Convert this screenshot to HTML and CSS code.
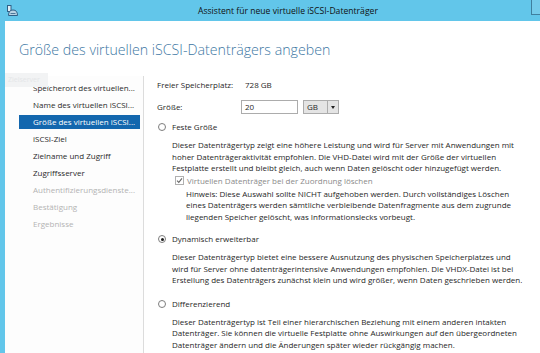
FILE: index.html
```html
<!DOCTYPE html>
<html lang="de">
<head>
    <meta charset="UTF-8">
    <title>Assistent für neue virtuelle iSCSI-Datenträger</title>
    <link rel="stylesheet" href="styles.css">
</head>
<body>
    <div class="window">
        <!-- Titelleiste -->
        <div class="titlebar">
            <svg class="app-icon" width="11" height="11" viewBox="0 0 11 11">
                <rect x="0.5" y="0.5" width="3.5" height="6" fill="#dfeef6" stroke="#2f5f86" stroke-width="1"/>
                <path d="M1.5 10.5 Q1.5 5 6 5 Q10.5 5 10.5 10.5 Z" fill="#b9d3e4" stroke="#2f5f86" stroke-width="1"/>
                <line x1="3.5" y1="8.5" x2="8.5" y2="8.5" stroke="#2f5f86" stroke-width="0.8"/>
            </svg>
            <span class="title">Assistent für neue virtuelle iSCSI-Datenträger</span>
            <span class="caption-btn"></span>
        </div>

        <div class="client">
            <h1>Größe des virtuellen iSCSI-Datenträgers angeben</h1>

            <div class="main">
                <div class="ghost">Zielserver</div>

                <!-- Schritte des Assistenten -->
                <ul class="nav">
                    <li>Speicherort des virtuellen...</li>
                    <li>Name des virtuellen iSCSI...</li>
                    <li class="active">Größe des virtuellen iSCSI...</li>
                    <li>iSCSI-Ziel</li>
                    <li>Zielname und Zugriff</li>
                    <li>Zugriffsserver</li>
                    <li class="disabled">Authentifizierungsdienste...</li>
                    <li class="disabled">Bestätigung</li>
                    <li class="disabled">Ergebnisse</li>
                </ul>

                <div class="content">
                    <div class="row">
                        <span class="label">Freier Speicherplatz:</span>
                        <span>728 GB</span>
                    </div>
                    <div class="row size-row">
                        <span class="label">Größe:</span>
                        <span class="textbox">20</span>
                        <span class="combo">GB<span class="combo-arrow"></span></span>
                    </div>

                    <div class="radio-row first">
                        <span class="radio"></span>Feste Größe
                    </div>
                    <p class="desc">
                        Dieser Datenträgertyp zeigt eine höhere Leistung und wird für Server mit Anwendungen mit<br>
                        hoher Datenträgeraktivität empfohlen. Die VHD-Datei wird mit der Größe der virtuellen<br>
                        Festplatte erstellt und bleibt gleich, auch wenn Daten gelöscht oder hinzugefügt werden.
                    </p>
                    <div class="check-row">
                        <span class="checkbox">
                            <svg width="7" height="7" viewBox="0 0 7 7"><path d="M1 3.6 L2.8 5.4 L6 1.4" fill="none" stroke="#6a6a6a" stroke-width="1.1"/></svg>
                        </span>Virtuellen Datenträger bei der Zuordnung löschen
                    </div>
                    <p class="desc note">
                        Hinweis: Diese Auswahl sollte NICHT aufgehoben werden. Durch vollständiges Löschen<br>
                        eines Datenträgers werden sämtliche verbleibende Datenfragmente aus dem zugrunde<br>
                        liegenden Speicher gelöscht, was Informationslecks vorbeugt.
                    </p>

                    <div class="radio-row">
                        <span class="radio checked"></span>Dynamisch erweiterbar
                    </div>
                    <p class="desc">
                        Dieser Datenträgertyp bietet eine bessere Ausnutzung des physischen Speicherplatzes und<br>
                        wird für Server ohne datenträgerintensive Anwendungen empfohlen. Die VHDX-Datei ist bei<br>
                        Erstellung des Datenträgers zunächst klein und wird größer, wenn Daten geschrieben werden.
                    </p>

                    <div class="radio-row last">
                        <span class="radio"></span>Differenzierend
                    </div>
                    <p class="desc">
                        Dieser Datenträgertyp ist Teil einer hierarchischen Beziehung mit einem anderen intakten<br>
                        Datenträger. Sie können die virtuelle Festplatte ohne Auswirkungen auf den übergeordneten<br>
                        Datenträger ändern und die Änderungen später wieder rückgängig machen.
                    </p>
                </div>
            </div>
        </div>
    </div>
</body>
</html>
```

FILE: styles.css
```css
/* Grundlayout des Fensters */
body {
    margin: 0;
    background: #62c6ea;
    font-family: "Open Sans", "Noto Sans", sans-serif;
    font-size: 8px;
    color: #1f1f1f;
    overflow: hidden;
}
.window {
    width: 540px;
    height: 353px;
    display: flex;
    flex-direction: column;
}
/* Titelleiste */
.titlebar {
    height: 21px;
    display: flex;
    align-items: center;
    flex-shrink: 0;
}
.app-icon {
    margin-left: 7px;
    margin-top: -1px;
}
.title {
    margin-left: 180px;
    font-size: 8.6px;
    color: #111;
}
.caption-btn {
    margin-left: auto;
    align-self: flex-start;
    width: 8px;
    height: 14px;
    border: 1px solid #3f7f9f;
    border-top: none;
    border-right: none;
    background: #75cbeb;
}
/* Inhaltsbereich */
.client {
    flex: 1;
    margin-left: 5px;
    background: #fff;
    display: flex;
    flex-direction: column;
}
h1 {
    margin: 19px 0 13px 14px;
    font-size: 14.2px;
    font-weight: 300;
    line-height: 20px;
    color: #3d77a3;
}
.main {
    flex: 1;
    display: flex;
    position: relative;
}
.ghost {
    position: absolute;
    left: 0;
    top: 0;
    width: 43px;
    height: 14px;
    background: #f2f3f4;
    color: #e4e6e8;
    font-size: 7px;
    line-height: 14px;
    padding-left: 3px;
    box-sizing: border-box;
    overflow: hidden;
}
/* Navigation links */
.nav {
    list-style: none;
    margin: 3px 0 0 0;
    padding: 5px 3px 0 14px;
    width: 121px;
    border-right: 1px solid #dcdcdc;
    background: #fdfdfd;
}
.nav li {
    height: 14px;
    line-height: 14px;
    margin-bottom: 3px;
    padding-left: 14px;
    white-space: nowrap;
    overflow: hidden;
    color: #2a2a2a;
}
.nav li.active {
    background: #1367ae;
    color: #fff;
}
.nav li.disabled {
    color: #b3b3b3;
}
/* Formular rechts */
.content {
    padding: 5px 0 0 13px;
}
.row {
    display: flex;
    align-items: center;
    height: 14px;
    line-height: 14px;
}
.label {
    width: 88px;
}
.size-row {
    margin-top: 8px;
}
.textbox {
    width: 52px;
    height: 12px;
    line-height: 12px;
    padding-left: 3px;
    border: 1px solid #acacac;
    background: #fff;
    margin-left: -4px;
}
.combo {
    position: relative;
    margin-left: 5px;
    width: 31px;
    height: 12px;
    line-height: 12px;
    padding-left: 3px;
    border: 1px solid #acacac;
    background: #e4e4e4;
}
.combo-arrow {
    position: absolute;
    right: 0;
    top: 0;
    width: 10px;
    height: 12px;
    border-left: 1px solid #acacac;
}
.combo-arrow::after {
    content: "";
    position: absolute;
    left: 3px;
    top: 5px;
    border-left: 2.5px solid transparent;
    border-right: 2.5px solid transparent;
    border-top: 3px solid #222;
}
.radio-row {
    display: flex;
    align-items: center;
    height: 14px;
    line-height: 14px;
    margin-top: 10px;
}
.radio-row.first {
    margin-top: 6px;
}
.radio-row.last {
    margin-top: 11px;
}
.radio {
    width: 8px;
    height: 8px;
    border: 1px solid #7d7d7d;
    border-radius: 50%;
    margin: 0 6px 0 1px;
    box-sizing: border-box;
    position: relative;
    background: #fff;
}
.radio.checked::after {
    content: "";
    position: absolute;
    left: 1.5px;
    top: 1.5px;
    width: 3px;
    height: 3px;
    border-radius: 50%;
    background: #1a1a1a;
}
.desc {
    margin: 5px 0 0 15px;
    line-height: 11.5px;
    white-space: nowrap;
}
.check-row {
    display: flex;
    align-items: center;
    height: 12px;
    margin: 1px 0 0 18px;
    color: #8a8a8a;
}
.checkbox {
    width: 7px;
    height: 7px;
    border: 1px solid #b0b0b0;
    margin-right: 3px;
    display: flex;
}
.desc.note {
    margin: 1px 0 0 29px;
}
```
